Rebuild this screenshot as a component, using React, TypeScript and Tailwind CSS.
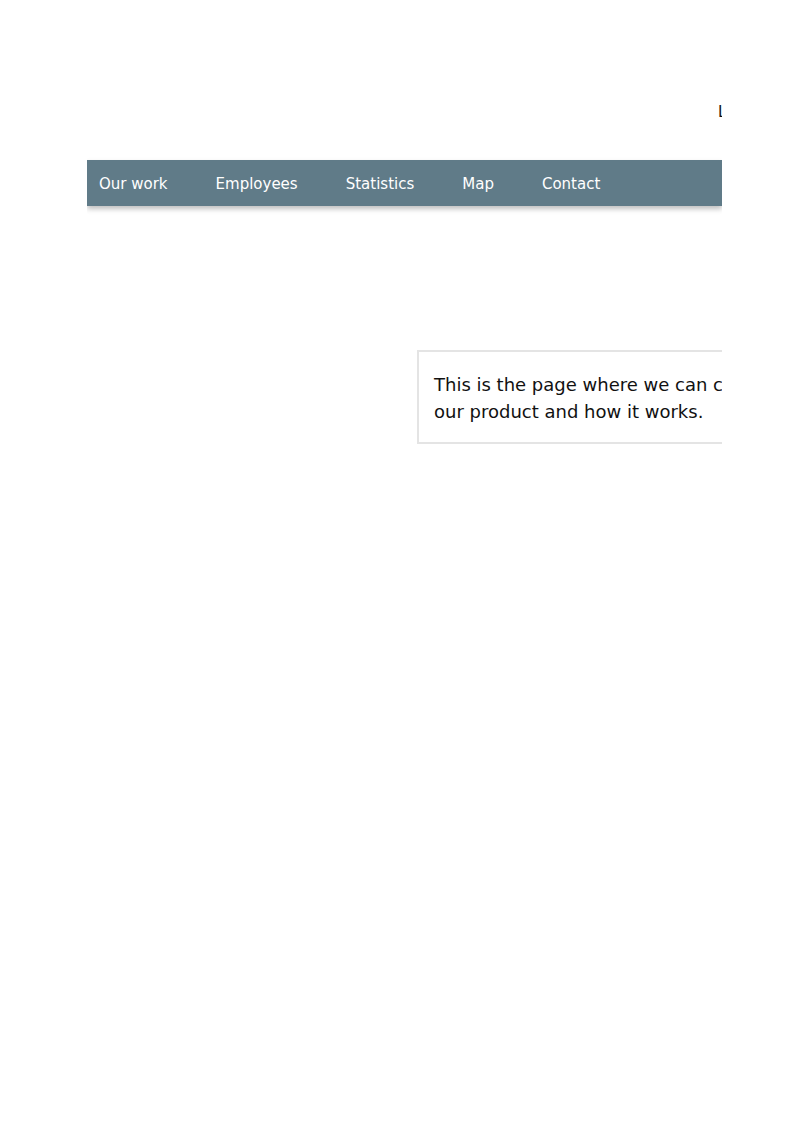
export default function App() {
  const links = ["Our work", "Employees", "Statistics", "Map", "Contact"];
  return (
    <div className="min-h-[1122px] bg-white font-['DejaVu_Sans',Verdana,sans-serif] text-[#111]">
      <div className="ml-[87px] w-[635px] overflow-hidden pt-[102px] pb-10">
        {/* top bar */}
        <div className="flex h-[20px] items-center whitespace-nowrap text-[15px]">
          <div className="w-[631px] shrink-0" />
          <span>Login</span>
        </div>

        {/* navigation */}
        <div className="mt-[38px] mb-2">
          <nav className="flex h-[46px] items-center gap-[48px] bg-[#607b88] pl-3 text-[15px] text-white shadow-[0_3px_5px_rgba(0,0,0,0.25)]">
            {links.map((l) => (
              <a key={l} className="whitespace-nowrap pt-[2px]">
                {l}
              </a>
            ))}
          </nav>
        </div>

        {/* content */}
        <div className="mt-[144px] flex">
          <div className="w-[330px] shrink-0" />
          <div className="w-[420px] shrink-0 whitespace-nowrap border-2 border-[#e4e4e4] px-[15px] pt-[19px] pb-[17px] text-[18px] leading-[27px]">
            This is the page where we can clearly explain
            <br />
            our product and how it works.
          </div>
        </div>
      </div>
    </div>
  );
}
